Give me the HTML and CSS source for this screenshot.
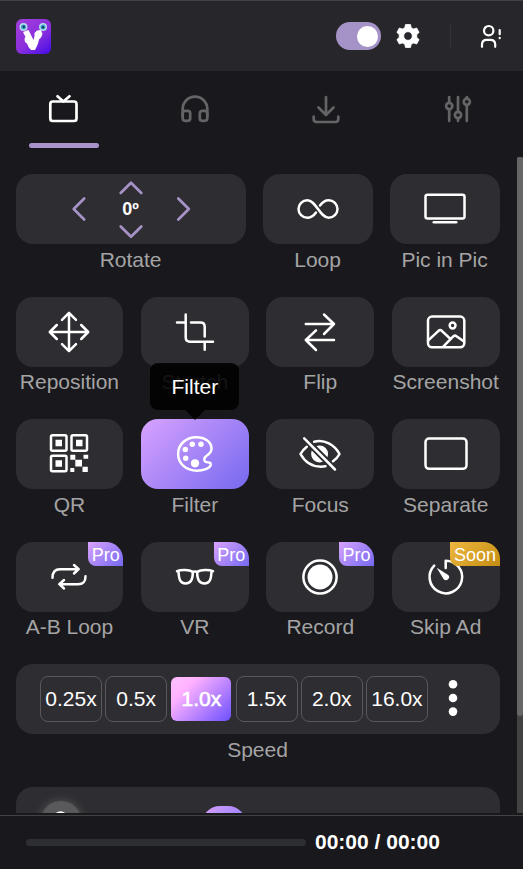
FILE: index.html
```html
<!DOCTYPE html>
<html lang="en">
<head>
<meta charset="utf-8">
<title>Video controls</title>
<link rel="stylesheet" href="styles.css">
</head>
<body>
<div class="app">
  <header class="header">
    <svg class="logo" viewBox="0 0 35 35">
      <defs><linearGradient id="lg" x1="0.2" y1="0" x2="1" y2="1"><stop offset="0" stop-color="#a03bdb"/><stop offset=".5" stop-color="#8a30dc"/><stop offset="1" stop-color="#430be8"/></linearGradient></defs>
      <rect width="35" height="35" rx="6" fill="url(#lg)"/>
      <path d="M7 13l5.500-2 2 4 1.500 3 1.500 3 1-4v-3l2.500-2.500 4-.5 1.500 4-1.500 3.500-2 2-1 4-1.500 3.500-1.500 3h-4l-2.500-3-1.500-3.500-2-1.500-.5-3.500 1-1.500z" fill="#fff"/>
      <circle cx="7.500" cy="8" r="4" fill="#b8dcea"/><circle cx="7.500" cy="8" r="2.500" fill="#3ba5d2"/><circle cx="7.800" cy="7.800" r="1.200" fill="#123752"/>
      <circle cx="27" cy="8" r="4" fill="#b8dcea"/><circle cx="27" cy="8" r="2.500" fill="#3ba5d2"/><circle cx="27" cy="8.300" r="1.200" fill="#123752"/>
    </svg>
    <div class="toggle"><span class="knob"></span></div>
    <svg class="gear" viewBox="-12 -12 24 24" fill="#fff"><path fill-rule="evenodd" d="M-2.500 -11.500H2.500L3.200 -8.300 5.600 -7 8.700 -8 11.100 -3.600 8.800 -1.400V1.400L11.100 3.600 8.700 8 5.600 7 3.200 8.300 2.500 11.500H-2.500L-3.200 8.300 -5.600 7 -8.700 8 -11.100 3.600 -8.800 1.400V-1.400L-11.100 -3.600 -8.700 -8 -5.600 -7 -3.200 -8.300ZM0 -4.300A4.300 4.300 0 1 0 0 4.300 4.300 4.300 0 1 0 0 -4.300Z"/></svg>
    <span class="divider"></span>
    <svg class="user line" viewBox="0 0 22 24"><circle cx="8.700" cy="6.700" r="4.700"/><path d="M2 22.800V20.500Q2 15.800 6.700 15.800H10.500Q15.200 15.800 15.200 20.500V22.800M19.700 6V10.200M19.700 13.800V14.200"/></svg>
  </header>

  <nav class="tabs">
    <div class="tab active"><svg viewBox="-16 -16 32 32"><rect x="-12.700" y="-7.500" width="26.200" height="19.500" rx="2.500"/><path d="M-5.500 -12.700L.4 -7.500 6.500 -12.700"/></svg></div>
    <div class="tab"><svg viewBox="-16 -16 32 32"><path d="M-12.300 7V0A12.300 12.300 0 0 1 12.300 0V7"/><rect x="-12.300" y="1.800" width="7.500" height="10" rx="2.500"/><rect x="4.800" y="1.800" width="7.500" height="10" rx="2.500"/></svg></div>
    <div class="tab"><svg viewBox="-16 -16 32 32"><path d="M0 -12V6M-7.500 -1.500L0 6 7.500 -1.500M-12.300 7.500V10Q-12.300 13 -9.300 13H9.300Q12.300 13 12.300 10V7.500"/></svg></div>
    <div class="tab"><svg viewBox="-16 -16 32 32"><path d="M-8.800 -12V-6.500M-8.800 .5V12M0 -12V2.800M0 9V12M8.800 -12V-10.500M8.800 -3.800V12"/><circle cx="-8.800" cy="-3" r="3.100"/><circle cx="0" cy="6" r="3.100"/><circle cx="8.800" cy="-7.200" r="3.100"/></svg></div>
  </nav>

  <main class="scroller">
    <div class="content">
      <div class="row row-top">
        <div class="tile"><div class="card">
          <svg class="rotate" viewBox="-60 -35 120 70"><path d="M-46.800 -10.500L-57.300 0 -46.800 10.500M47.300 -10.500L57.800 0 47.300 10.500M-10.300 -16L0 -26.300 10.300 -16M-10.300 17.500L0 27.800 10.300 17.500"/></svg>
          <b class="angle">0º</b>
        </div><span class="label">Rotate</span></div>
        <div class="tile"><div class="card"><svg class="icon line" viewBox="-24 -24 48 48"><path d="M-2 3.500C-4.500 7 -7 8.800 -10.700 8.800A8.800 8.800 0 0 1 -10.700 -8.800C-2 -8.800 2 8.800 10.700 8.800A8.800 8.800 0 0 0 10.700 -8.800C7 -8.800 4.500 -7 2 -3.500"/></svg></div><span class="label">Loop</span></div>
        <div class="tile"><div class="card"><svg class="icon line" viewBox="-24 -24 48 48"><rect x="-19.500" y="-14.200" width="39" height="23.700" rx="2"/><path stroke-width="2.600" d="M-11.200 13.300H11.200"/></svg></div><span class="label">Pic in Pic</span></div>
      </div>

      <div class="row">
        <div class="tile"><div class="card"><svg class="icon line" viewBox="-24 -24 48 48"><path d="M-19 0H19M0 -19V19M-7 -12.200L0 -19.200 7 -12.200M-7 12.200L0 19.200 7 12.200M-12.200 -7L-19.200 0 -12.200 7M12.200 -7L19.200 0 12.200 7"/></svg></div><span class="label">Reposition</span></div>
        <div class="tile"><div class="card"><svg class="icon line" viewBox="-24 -24 48 48"><path d="M-9.300 -17.500V5.500Q-9.300 9.700 -5.100 9.700H18M-18 -9.600H-9.300M-4 -9.600H5.500Q9.700 -9.600 9.700 -5.400V4.500M9.700 9.700V17.800"/></svg></div><span class="label">Stretch</span></div>
        <div class="tile"><div class="card"><svg class="icon line" viewBox="-24 -24 48 48"><path d="M-14.200 -8H14M4 -17.500L14 -8 4 2M14 8H-14.200M-4 -1.700L-14.200 8 -4 18"/></svg></div><span class="label">Flip</span></div>
        <div class="tile"><div class="card"><svg class="icon line" viewBox="-24 -24 48 48"><rect x="-18" y="-15.400" width="36.300" height="30.600" rx="4"/><circle cx="6.600" cy="-6.500" r="2.900"/><path d="M-18 8.700L-7.500 -1.200Q-5.800 -2.500 -4.200 -1.200L4 6.500M-3 14.800L7.500 4.200Q9 3 10.500 4.200L18 9.500"/></svg></div><span class="label">Screenshot</span></div>
      </div>

      <div class="row">
        <div class="tile"><div class="card"><svg class="icon line" viewBox="-24 -24 48 48"><rect x="-18" y="-18.700" width="15.500" height="15.500" rx="1.500"/><rect x="2.500" y="-18.700" width="15.500" height="15.500" rx="1.500"/><rect x="-18" y="1.800" width="15.500" height="15.500" rx="1.500"/><path class="solid" d="M-13.500 -14.200h6.500v6.500h-6.500zM7 -14.200h6.500v6.500h-6.500zM-13.500 6.300h6.500v6.500h-6.500zM1.300 .8h5v5h-5zM14.500 .8h4.700v4h-4.700zM6.300 5.800h6.700v6.700h-6.700zM1.300 14h4v4h-4zM13.500 12.800h5.300v5.300h-5.300z"/></svg></div><span class="label">QR</span></div>
        <div class="tile">
          <div class="card card-active"><svg class="icon line" viewBox="-24 -24 48 48"><path d="M1 -16.800C10.500 -16.800 16.500 -12 16.500 -5.500C16.500 -2.500 14.500 0 11.500 1.800C9 3.200 8.500 6.300 10.500 7.700C12.500 9 16.300 7.500 15.700 11C15 14.500 8 16.700 2 16.700C-9 16.700 -16.900 9.500 -16.900 0C-16.900 -9.500 -9 -16.800 1 -16.800Z"/><g class="solid"><circle cx="-9.700" cy="-4.500" r="2.700"/><circle cx="-2.700" cy="-9.700" r="2.700"/><circle cx="6" cy="-9.700" r="2.700"/><circle cx="-9.300" cy="4.300" r="2.700"/><circle cx="0" cy="9.300" r="4.100"/></g></svg></div>
          <span class="label">Filter</span>
          <div class="tooltip">Filter</div>
        </div>
        <div class="tile"><div class="card"><svg class="icon line" viewBox="-24 -24 48 48"><circle class="solid" cx="-.4" cy="0" r="8.500"/><path class="cut" d="M-16 -16L15 15.500"/><path d="M-15.800 -15.700L15 15.500M-13.200 -7.200C-16 -5 -18.300 -2.200 -19.500 0C-14 10 -5 13.800 5.500 12.300M-5.800 -12.200C4.500 -15 14.500 -9 19.500 0C18 3 15.500 5.500 13 7.300"/></svg></div><span class="label">Focus</span></div>
        <div class="tile"><div class="card"><svg class="icon line" viewBox="-24 -24 48 48"><rect x="-20.500" y="-15.500" width="41" height="30.300" rx="3.500"/></svg></div><span class="label">Separate</span></div>
      </div>

      <div class="row">
        <div class="tile"><div class="card"><svg class="icon line" viewBox="-24 -24 48 48"><path d="M-16.500 .8C-16.500 -5 -14.500 -7.800 -9 -7.800H9.500M5 -12L9.700 -7.800 5 -3.500M16.500 -.8C16.500 5 14.500 7.200 9 7.200H-9.500M-5 3L-9.700 7.200 -5 11.500"/></svg><span class="badge">Pro</span></div><span class="label">A-B Loop</span></div>
        <div class="tile"><div class="card"><svg class="icon line" viewBox="-24 -24 48 48"><path d="M-18 -5.800C-14 -7.400 -6 -7.400 -2.200 -5.200C-2 2 -4 6.400 -9.500 6.400C-15 6.400 -16.200 2 -16.500 -5.800M18 -5.800C14 -7.400 6 -7.400 2.200 -5.200C2 2 4 6.400 9.500 6.400C15 6.400 16.200 2 16.500 -5.800M-2.500 -5Q0 -6 2.500 -5"/></svg><span class="badge">Pro</span></div><span class="label">VR</span></div>
        <div class="tile"><div class="card"><svg class="icon line" viewBox="-24 -24 48 48"><circle r="16.600"/><circle class="solid" r="12.500"/></svg><span class="badge">Pro</span></div><span class="label">Record</span></div>
        <div class="tile"><div class="card"><svg class="icon line" viewBox="-24 -24 48 48"><path d="M-.3 -9V-16.300A16.300 16.300 0 1 1 -11.800 -11.400"/><path class="solid" d="M-9.300 -9.300L2.200 -2A3 3 0 1 1 -2.300 2.200Z"/></svg><span class="badge badge-soon">Soon</span></div><span class="label">Skip Ad</span></div>
      </div>

      <div class="tile wide">
        <div class="card speeds">
          <span class="speed">0.25x</span><span class="speed">0.5x</span><span class="speed selected">1.0x</span><span class="speed">1.5x</span><span class="speed">2.0x</span><span class="speed">16.0x</span>
          <svg class="dots" viewBox="0 0 10 40" fill="#fff"><circle cx="5" cy="6.300" r="4.300"/><circle cx="5" cy="20" r="4.300"/><circle cx="5" cy="33.600" r="4.300"/></svg>
        </div>
        <span class="label">Speed</span>
      </div>

      <div class="tile wide">
        <div class="card volume">
          <div class="speaker"><svg viewBox="0 0 40 40" fill="none" stroke="#fff" stroke-width="2.500"><path d="M13 16Q16 11.500 19.500 11.500T26 16V28H13Z"/></svg></div>
          <div class="thumb"></div>
        </div>
      </div>
    </div>
    <div class="scrollbar"><div class="scroll-thumb"></div></div>
  </main>

  <footer class="player">
    <div class="progress"></div>
    <b class="time">00:00 / 00:00</b>
  </footer>
</div>
</body>
</html>
```
FILE: styles.css
```css
* { box-sizing: border-box; }
body {
  margin: 0;
  background: #19181c;
  font-family: "Liberation Sans", Arial, sans-serif;
  font-size: 21px;
  color: #fff;
}
svg { display: block; flex: none; }
.app { height: 869px; display: flex; flex-direction: column; overflow: hidden; }

.header {
  height: 71px;
  flex: none;
  display: flex;
  align-items: center;
  padding: 0 21px 0 16px;
  background: #27262a;
  border-top: 1px solid #424144;
}
.logo { width: 35px; height: 35px; margin-top: 1px; }
.toggle {
  width: 45px;
  height: 28px;
  margin-left: auto;
  border-radius: 14px;
  background: #a593c7;
  padding: 4px 3px;
  display: flex;
  justify-content: flex-end;
}
.knob { width: 21px; height: 21px; border-radius: 50%; background: #fff; }
.gear { width: 24px; height: 24px; margin-left: 15px; stroke: #fff; stroke-width: .8; stroke-linejoin: round; }
.divider { width: 1px; height: 24px; margin: 0 29px 0 30px; background: #343338; }
.user { width: 22px; height: 24px; }

.line { fill: none; stroke: #fff; stroke-width: 2.5; stroke-linecap: round; stroke-linejoin: round; }
.line.user { stroke-width: 2.200; }
.solid { fill: #fff; stroke: none; }
.cut { stroke: #2e2d31; stroke-width: 6.500; }

.tabs { height: 86px; flex: none; display: flex; justify-content: space-between; padding: 0 28px 0 25.500px; }
.tab { width: 75px; padding-top: 22px; display: flex; flex-direction: column; align-items: center; }
.tab svg { width: 32px; height: 32px; fill: none; stroke: #646466; stroke-width: 2.700; stroke-linecap: round; stroke-linejoin: round; }
.tab.active svg { stroke: #fff; }
.tab.active::after { content: ""; width: 70px; height: 5px; margin: 18px 0 0 1px; border-radius: 3px; background: #a993ca; }

.scroller { height: 656px; flex: none; display: flex; overflow: hidden; }
.content { width: 517px; padding: 17px 17.480px 0 15.600px; }
.scrollbar { width: 6px; background: #424242; }
.scroll-thumb { height: 559px; background: #666; border-radius: 3px; }

.row { display: grid; grid-template-columns: repeat(4, 1fr); column-gap: 17.800px; }
.row-top { grid-template-columns: 230px 110px 110px; column-gap: 17px; }
.tile { position: relative; height: 122.600px; display: flex; flex-direction: column; align-items: center; }
.card {
  position: relative;
  width: 100%;
  height: 70px;
  flex: none;
  display: flex;
  align-items: center;
  justify-content: center;
  border-radius: 17px;
  background: #2e2d31;
  overflow: hidden;
}
.card-active { background: linear-gradient(135deg, #d8a2ff, #7569ef); }
.icon { width: 48px; height: 48px; }
.label { margin-top: 3.600px; line-height: 24px; color: #a4a4a5; white-space: nowrap; }

.rotate { width: 120px; height: 70px; fill: none; stroke: #a593c7; stroke-width: 2.700; stroke-linecap: round; stroke-linejoin: round; }
.angle { position: absolute; font-size: 18px; line-height: 20px; }

.badge {
  position: absolute;
  top: 0;
  right: 0;
  height: 24px;
  padding: 0 3.500px;
  border-radius: 0 0 0 8px;
  background: linear-gradient(135deg, #d8a2ff, #7569ef);
  font-size: 18px;
  line-height: 26px;
}
.badge-soon { background: linear-gradient(135deg, #edb73f, #c58d12); }

.tooltip {
  position: absolute;
  z-index: 2;
  top: -56px;
  left: 50%;
  margin-left: -44.500px;
  width: 89px;
  height: 47px;
  border-radius: 8px;
  background: rgba(0, 0, 0, .88);
  line-height: 47px;
  text-align: center;
}
.tooltip::after {
  content: "";
  position: absolute;
  top: 100%;
  left: 50%;
  margin-left: -10px;
  border: 10px solid transparent;
  border-bottom: 0;
  border-top-color: rgba(0, 0, 0, .88);
}

.speeds { justify-content: flex-start; gap: 3.200px; padding-left: 24.400px; }
.speed {
  width: 62px;
  height: 46px;
  border: 1px solid #59585b;
  border-radius: 8px;
  line-height: 44px;
  text-align: center;
}
.selected {
  width: 60px;
  height: 44px;
  margin: 0 1px;
  border: 0;
  border-radius: 6px;
  background: linear-gradient(135deg, #ffbcff 10%, #ffb2ff 25%, #6c50ff);
  -webkit-text-stroke: .6px #fff;
}
.dots { width: 10px; height: 40px; margin: -2px 0 0 16.500px; }

.volume { align-items: flex-start; justify-content: flex-start; padding-left: 25.400px; }
.speaker { width: 40px; height: 40px; margin-top: 14px; border-radius: 50%; background: #59595b; box-shadow: 0 0 10px #59595b; }
.thumb { width: 44px; height: 44px; margin: 19px 0 0 121px; border-radius: 18px; background: linear-gradient(135deg, #d8a2ff, #7569ef); }

.player {
  height: 54px;
  flex: none;
  margin-top: 2px;
  border-top: 1px solid #424144;
  display: flex;
  align-items: center;
  padding-left: 26px;
}
.progress { width: 280px; height: 7px; margin-top: 0; border-radius: 4px; background: #2e2f32; }
.time { margin: -2px 0 0 9px; white-space: nowrap; }
```
